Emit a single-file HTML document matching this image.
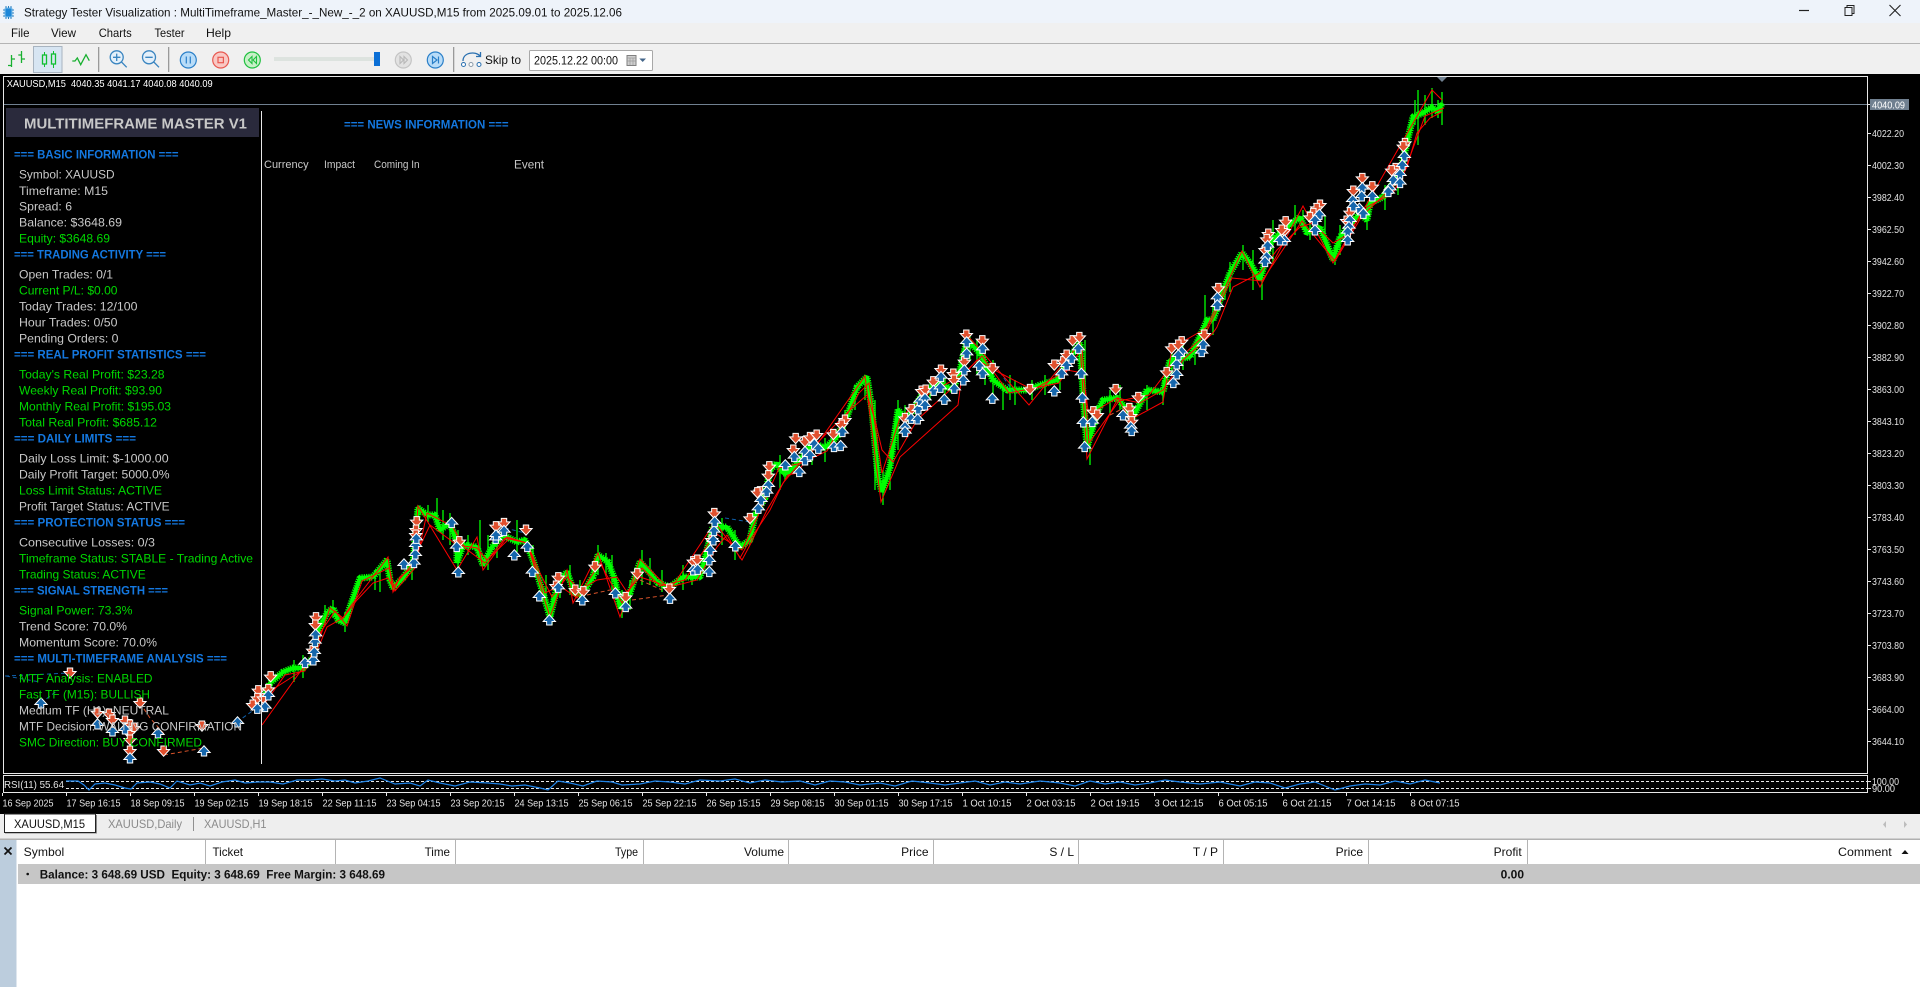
<!DOCTYPE html>
<html lang="en"><head><meta charset="utf-8"><title>Strategy Tester Visualization</title>
<style>
html,body{margin:0;padding:0;width:1920px;height:987px;overflow:hidden;background:#fff}
svg{display:block;font-family:"Liberation Sans",Arial,sans-serif}
.u{font-size:12px;fill:#111}
.w{font-size:12px;fill:#c8c8c8}
.g{font-size:12px;fill:#00d800}
.b{font-size:12px;font-weight:bold;fill:#1478e0}
.a{font-size:10.5px;fill:#e4e4e4}
.n{fill:none}
</style></head><body>
<svg width="1920" height="987" viewBox="0 0 1920 987" xmlns="http://www.w3.org/2000/svg">
<defs>
<polygon id="d1" points="-2.200,-4.500 2.200,-4.500 2.200,-1 5,-1 0,4.500 -5,-1 -2.200,-1" fill="#e0502e" stroke="#fff" stroke-width="2" paint-order="stroke"/>
<polygon id="u1" points="-2.200,4.500 2.200,4.500 2.200,1 5,1 0,-4.500 -5,1 -2.200,1" fill="#1566ac" stroke="#fff" stroke-width="2" paint-order="stroke"/>
<g id="d"><use href="#d1" transform="scale(3)"/></g>
<g id="u"><use href="#u1" transform="scale(3)"/></g>
<polyline id="pr" class="n" stroke-linejoin="bevel" points="263,700 270,683 283,672 293,668 303,668 313,658 318,630 327,613 333,608 338,620 345,623 350,607 360,578 373,577 387,560 390,580 393,588 403,578 413,563 418,508 427,515 435,515 440,530 450,523 457,543 457,563 463,545 477,547 483,565 492,547 503,535 517,542 525,540 533,560 543,593 550,617 558,583 567,572 575,595 583,593 593,577 598,555 608,562 615,580 620,608 630,593 640,562 650,573 658,583 670,587 683,577 700,577 713,527 727,527 740,547 750,540 755,515 765,498 770,470 777,463 783,473 788,473 800,460 813,443 825,448 837,437 847,417 857,387 867,377 872,410 878,477 882,492 890,467 898,410 907,420 923,393 940,383 953,390 960,370 967,340 980,353 993,380 1007,390 1027,390 1040,385 1057,380 1070,357 1080,343 1083,393 1087,447 1097,413 1103,400 1117,398 1133,417 1147,390 1163,392 1170,360 1190,357 1203,330 1207,320 1213,320 1220,300 1230,273 1242,253 1250,263 1260,280 1270,243 1283,230 1300,217 1307,233 1320,227 1333,260 1340,237 1360,213 1367,220 1370,203 1383,197 1400,173 1413,117 1423,113 1432,107 1438,112 1442,103"/>
</defs>

<!-- window chrome -->
<rect x="0" y="0" width="1920" height="23" fill="#eef3fa"/>
<rect x="0" y="23" width="1920" height="20" fill="#f0f0f0"/>
<rect x="0" y="43" width="1920" height="1" fill="#b4b4b4"/>
<rect x="0" y="44" width="1920" height="30" fill="#f0f0f0"/>
<!-- app icon -->
<rect x="5" y="8" width="7" height="9" rx="1" fill="#1c86d8" stroke="#7cc0ee"/>
<path d="M3 10h2M3 13h2M3 16h2M12 10h2M12 13h2M12 16h2M6 6v2M8.500 6v2M11 6v2M6 17v2M8.500 17v2M11 17v2" stroke="#2a7fc0" fill="none"/>
<text x="24" y="16.500" class="u" textLength="598" lengthAdjust="spacingAndGlyphs">Strategy Tester Visualization : MultiTimeframe_Master_-_New_-_2 on XAUUSD,M15 from 2025.09.01 to 2025.12.06</text>
<path d="M1799 10.500h10" stroke="#222" fill="none" stroke-width="1.200"/>
<path d="M1845 7.500h7v8h-7zM1847 7.500v-2h7v8h-2" stroke="#222" fill="none"/>
<path d="M1889.500 5l11 11M1900.500 5l-11 11" stroke="#222" fill="none" stroke-width="1.100"/>

<!-- menu -->
<text x="11" y="37" class="u" textLength="18.500" lengthAdjust="spacingAndGlyphs">File</text>
<text x="51" y="37" class="u" textLength="25" lengthAdjust="spacingAndGlyphs">View</text>
<text x="98.700" y="37" class="u" textLength="33" lengthAdjust="spacingAndGlyphs">Charts</text>
<text x="154.500" y="37" class="u" textLength="30" lengthAdjust="spacingAndGlyphs">Tester</text>
<text x="206" y="37" class="u" textLength="25" lengthAdjust="spacingAndGlyphs">Help</text>

<!-- toolbar -->
<path d="M11.500 55v12M8 65.500h3.500M11.500 59h3.500M21.500 51v12M18.300 55h3.200M21.500 59h3.500" stroke="#18b030" fill="none" stroke-width="1.300"/>
<rect x="33.500" y="46.500" width="28.500" height="26" fill="#d7e5f2" stroke="#a8b4c0"/>
<path d="M44.500 52v3M44.500 64v3M53.500 51v3M53.500 64v4" stroke="#0fbf2f" fill="none"/>
<rect x="42.500" y="55" width="4" height="9" fill="none" stroke="#0fbf2f" stroke-width="1.300"/>
<rect x="51.500" y="54" width="4" height="10" fill="none" stroke="#0fbf2f" stroke-width="1.300"/>
<polyline points="72.300,61 75,61 77.300,58 80.700,64.700 86,54.700 89.300,60.700" class="n" stroke="#18b030" stroke-width="1.300"/>
<rect x="98" y="47" width="1.300" height="25" fill="#9a9a9a"/>
<circle cx="116.700" cy="57.300" r="6.500" fill="#e4f0fa" stroke="#3a85c0" stroke-width="1.300"/>
<path d="M121.500 62l5.200 5.300M113 57.300h7.400M116.700 53.600v7.400" stroke="#3a85c0" fill="none" stroke-width="1.300"/>
<circle cx="149" cy="57.300" r="6.500" fill="#e4f0fa" stroke="#3a85c0" stroke-width="1.300"/>
<path d="M153.800 62l5.200 5.300M145.300 57.300h7.400" stroke="#3a85c0" fill="none" stroke-width="1.300"/>
<rect x="168" y="47" width="1.300" height="25" fill="#9a9a9a"/>
<circle cx="188.300" cy="60" r="8" fill="#b8dcf8" stroke="#2a7fc8" stroke-width="1.200"/>
<path d="M186.300 56.500v7M190.300 56.500v7" stroke="#2a7fc8" fill="none" stroke-width="1.200"/>
<circle cx="220.700" cy="60" r="8" fill="#f9c8c4" stroke="#e85850" stroke-width="1.200"/>
<rect x="218" y="57.300" width="5.400" height="5.400" fill="none" stroke="#e85850" stroke-width="1.200"/>
<circle cx="252.300" cy="60" r="8" fill="#c8f0c8" stroke="#20c040" stroke-width="1.200"/>
<path d="M252 56.500l-3.500 3.500 3.500 3.500zM256.500 56.500l-3.500 3.500 3.500 3.500z" fill="none" stroke="#20c040" stroke-width="1.100"/>
<rect x="274" y="57" width="101" height="4" fill="#dde3df"/>
<rect x="374" y="52" width="6" height="14" fill="#0b6fd6"/>
<circle cx="403.300" cy="60" r="8" fill="#e2e2e2" stroke="#c4c4c4" stroke-width="1.200"/>
<path d="M400 56.500l3.500 3.500-3.500 3.500zM404 56.500l3.500 3.500-3.500 3.500z" fill="none" stroke="#b8b8b8" stroke-width="1.100"/>
<circle cx="435.300" cy="60" r="8" fill="#b8dcf8" stroke="#2a7fc8" stroke-width="1.200"/>
<path d="M432.500 56.500l4.500 3.500-4.500 3.500zM438.500 56.500v7" fill="none" stroke="#2a7fc8" stroke-width="1.200"/>
<rect x="453" y="47" width="1.300" height="25" fill="#9a9a9a"/>
<path d="M463 61c0-9 13-10 17-5M480.500 52v4.500h-4.500" fill="none" stroke="#2a70b0" stroke-width="1.300"/>
<circle cx="463.500" cy="64.500" r="2" fill="#fff" stroke="#2a70b0"/>
<circle cx="471" cy="64.500" r="2" fill="#fff" stroke="#8a9aa8"/>
<circle cx="479" cy="64.500" r="2" fill="#fff" stroke="#2a70b0"/>
<text x="485" y="64" class="u" textLength="36" lengthAdjust="spacingAndGlyphs">Skip to</text>
<rect x="529.500" y="50.500" width="123" height="20" rx="1" fill="#fff" stroke="#a8a8a8"/>
<text x="534" y="64.500" class="u" textLength="84" lengthAdjust="spacingAndGlyphs">2025.12.22 00:00</text>
<rect x="627" y="55.500" width="9" height="10" fill="#cfcfcf" stroke="#808080"/>
<path d="M627 58h9M630 58v7M633 58v7M627 61h9" stroke="#9a9a9a" fill="none" stroke-width=".7"/>
<polygon points="639.300,58.500 646,58.500 642.700,62" fill="#44668a"/>

<!-- chart area -->
<rect x="0" y="74" width="1920" height="740" fill="#000"/>
<rect x="3.500" y="76.500" width="1864" height="697" fill="none" stroke="#e8e8e8"/>
<rect x="3.500" y="775.500" width="1864" height="17" fill="none" stroke="#e8e8e8"/>
<rect x="4" y="104" width="1863" height="1" fill="#708090"/>
<polygon points="1437,77 1447,77 1442,82" fill="#708090"/>

<text x="6.700" y="87" class="a" style="fill:#fff" textLength="206" lengthAdjust="spacingAndGlyphs">XAUUSD,M15&#160; 4040.35 4041.17 4040.08 4040.09</text>

<!-- green price bars -->
<use href="#pr" stroke="#00ff00" stroke-width="4"/>
<use href="#pr" stroke="#00ff00" stroke-width="7" stroke-dasharray="1.300 1"/>
<path class="n" stroke="#00ff00" stroke-width="1.300" d="M294 660V682M303 655V678M325 605V625M333 600V618M345 612V632M375 570V590M380 570V592M412 555V580M418 505V520M428 505V522M437 498V525M443 510V540M450 513V545M458 530V575M468 535V555M480 520V560M488 535V570M497 530V558M517 520V552M533 545V575M546 575V610M552 595V625M560 575V598M570 565V595M580 580V605M598 545V575M606 553V575M612 555V590M622 590V618M630 580V610M642 550V585M650 558V585M662 570V592M683 565V590M692 565V585M712 520V540M722 518V545M735 530V560M770 465V490M780 455V490M785 460V480M812 435V465M825 438V462M845 410V430M855 385V410M865 375V400M875 400V490M883 470V505M890 450V490M898 400V450M905 405V435M930 380V400M945 378V395M970 335V360M977 340V375M985 345V385M993 360V395M1003 385V410M1010 375V400M1015 380V405M1032 380V400M1045 375V395M1060 370V390M1085 340V430M1090 425V465M1097 405V425M1110 390V415M1120 385V410M1133 405V430M1147 385V410M1163 380V405M1172 345V375M1183 345V370M1195 345V365M1205 295V350M1213 305V335M1225 285V300M1230 262V292M1243 245V270M1253 250V290M1262 270V300M1273 220V265M1295 205V235M1303 210V230M1310 210V240M1325 215V240M1335 245V265M1340 225V255M1367 205V230M1385 185V210M1398 170V195M1415 100V125M1418 90V145M1425 95V125M1432 88V118M1438 100V118M1442 92V125"/>
<!-- dashed series -->
<g class="n" stroke="#0f5ea8" stroke-dasharray="4 3">
<polyline points="5,676 70,673"/><polyline points="6,676 40,682"/><polyline points="41,703 58,690"/><polyline points="237,722 262,704"/>
<polyline points="505,528 525,533"/><polyline points="725,518 750,522"/><polyline points="1000,372 1015,395"/>
</g>
<g class="n" stroke="#d9532a" stroke-dasharray="4 3">
<polyline points="164,755 204,748"/><polyline points="140,703 150,718 165,735"/><polyline points="587,595 610,590"/><polyline points="632,600 668,595"/><polyline points="640,580 662,590"/><polyline points="1110,415 1130,405"/>
</g>
<!-- red lines -->
<polyline class="n" stroke="#f00" points="262,725 300,672 313,658 330,608 343,618 350,607 388,557 393,592 400,577 413,567 418,506 457,570 477,537 483,570 507,537 527,543 550,617 567,570 573,603 598,553 620,617 640,559 670,590 715,522 742,560 750,545 767,510 788,475 797,473 865,376 881,502 900,457 958,405 967,335 1029,405 1080,343 1087,459 1118,398 1130,420 1163,402 1172,348 1203,330 1207,327 1242,251 1260,287 1303,206 1333,263 1373,193 1432,90 1442,100"/>
<polyline class="n" stroke="#f00" points="267,693 300,672 313,660 327,627 343,618 357,600 373,583 388,578 393,587 410,567 430,525 457,545 477,548 487,560 510,538 527,543 540,573 552,597 567,577 580,590 597,580 617,577 627,592 640,577 670,587 697,580 717,547 727,535 740,558 750,540 770,510 783,483 817,443 850,410 867,395 875,420 882,450 893,462 917,420 950,390 977,360 1000,373 1033,390 1067,370 1083,373 1088,410 1097,410 1117,398 1140,403 1163,390 1183,360 1213,333 1217,327 1233,287 1260,273 1277,250 1300,227 1313,223 1333,243 1347,235 1367,207 1393,193 1407,167 1417,133 1430,118 1442,112"/>
<polyline class="n" stroke="#f00" transform="translate(2,3)" points="263,700 283,672 303,668 318,630 333,608 345,623 360,578 387,565 393,588 413,565 425,510 450,523 463,545 483,560 503,535 525,540 543,590 558,583 575,595 598,560 620,600 640,565 658,583 683,577 713,530 740,547 755,515 777,465 800,460 825,448 857,390 867,380 880,470 898,415 923,393 960,372 980,353 1007,390 1057,380 1080,345 1087,440 1117,398 1147,392 1170,362 1203,332 1230,275 1260,278 1300,218 1333,258 1360,213 1400,175 1423,113 1442,105"/>

<!-- arrows -->
<g>
<use href="#u1" x="41" y="703"/><use href="#d1" x="70" y="673"/><use href="#d1" x="97.500" y="713"/><use href="#d1" x="109" y="714"/><use href="#d1" x="112.500" y="720"/><use href="#d1" x="125" y="721"/><use href="#d1" x="130" y="725"/><use href="#d1" x="134" y="728"/><use href="#d1" x="129" y="733"/><use href="#d1" x="130" y="740"/><use href="#d1" x="130" y="751"/><use href="#d1" x="140" y="703"/><use href="#d1" x="163.600" y="751"/><use href="#d1" x="202" y="726"/>
<use href="#u1" x="97.500" y="724"/><use href="#u1" x="112.500" y="731"/><use href="#u1" x="125" y="729"/><use href="#u1" x="130" y="758"/><use href="#u1" x="158" y="733"/><use href="#u1" x="204" y="751"/><use href="#u1" x="237.500" y="722"/>
</g>
<g transform="translate(250,480) scale(.33333)">
<use href="#d" x="62" y="590"/><use href="#d" x="25" y="632"/><use href="#d" x="22" y="655"/><use href="#d" x="55" y="628"/><use href="#d" x="40" y="655"/><use href="#d" x="8" y="675"/><use href="#d" x="198" y="413"/><use href="#d" x="196" y="435"/><use href="#d" x="188" y="512"/><use href="#d" x="500" y="125"/><use href="#d" x="498" y="150"/><use href="#d" x="497" y="165"/><use href="#d" x="628" y="185"/><use href="#d" x="738" y="140"/><use href="#d" x="762" y="130"/><use href="#d" x="828" y="150"/><use href="#d" x="925" y="293"/><use href="#d" x="918" y="318"/><use href="#d" x="976" y="330"/><use href="#d" x="1000" y="335"/><use href="#d" x="1035" y="260"/><use href="#d" x="1127" y="352"/><use href="#d" x="1162" y="281"/><use href="#d" x="1258" y="327"/><use href="#d" x="1330" y="245"/><use href="#d" x="1342" y="240"/><use href="#d" x="1393" y="100"/><use href="#d" x="1385" y="180"/><use href="#d" x="1500" y="115"/>
<use href="#u" x="45" y="680"/><use href="#u" x="22" y="685"/><use href="#u" x="55" y="645"/><use href="#u" x="165" y="548"/><use href="#u" x="190" y="540"/><use href="#u" x="193" y="516"/><use href="#u" x="195" y="485"/><use href="#u" x="197" y="463"/><use href="#u" x="462" y="252"/><use href="#u" x="492" y="248"/><use href="#u" x="496" y="222"/><use href="#u" x="497" y="195"/><use href="#u" x="499" y="175"/><use href="#u" x="605" y="128"/><use href="#u" x="620" y="200"/><use href="#u" x="625" y="276"/><use href="#u" x="737" y="175"/><use href="#u" x="738" y="165"/><use href="#u" x="762" y="152"/><use href="#u" x="793" y="225"/><use href="#u" x="832" y="200"/><use href="#u" x="847" y="275"/><use href="#u" x="868" y="348"/><use href="#u" x="898" y="420"/><use href="#u" x="925" y="322"/><use href="#u" x="997" y="360"/><use href="#u" x="1096" y="339"/><use href="#u" x="1127" y="380"/><use href="#u" x="1260" y="355"/><use href="#u" x="1330" y="270"/><use href="#u" x="1343" y="268"/><use href="#u" x="1378" y="275"/><use href="#u" x="1378" y="240"/><use href="#u" x="1381" y="210"/><use href="#u" x="1390" y="180"/><use href="#u" x="1392" y="152"/><use href="#u" x="1394" y="125"/><use href="#u" x="1456" y="198"/>
</g>
<g transform="translate(750,310) scale(.33333)">
<use href="#d" x="58" y="470"/><use href="#d" x="55" y="497"/><use href="#d" x="30" y="545"/><use href="#d" x="22" y="548"/><use href="#d" x="137" y="385"/><use href="#d" x="165" y="395"/><use href="#d" x="180" y="382"/><use href="#d" x="200" y="375"/><use href="#d" x="130" y="420"/><use href="#d" x="250" y="373"/><use href="#d" x="285" y="330"/><use href="#d" x="275" y="345"/><use href="#d" x="465" y="325"/><use href="#d" x="485" y="298"/><use href="#d" x="515" y="243"/><use href="#d" x="527" y="240"/><use href="#d" x="550" y="215"/><use href="#d" x="573" y="180"/><use href="#d" x="610" y="192"/><use href="#d" x="612" y="210"/><use href="#d" x="643" y="155"/><use href="#d" x="649" y="75"/><use href="#d" x="697" y="92"/><use href="#d" x="728" y="175"/><use href="#d" x="840" y="238"/><use href="#d" x="913" y="165"/><use href="#d" x="940" y="155"/><use href="#d" x="950" y="135"/><use href="#d" x="968" y="92"/><use href="#d" x="988" y="82"/><use href="#d" x="1030" y="305"/><use href="#d" x="1042" y="315"/><use href="#d" x="1097" y="238"/><use href="#d" x="1138" y="295"/><use href="#d" x="1142" y="318"/><use href="#d" x="1145" y="335"/><use href="#d" x="1165" y="262"/><use href="#d" x="1250" y="187"/><use href="#d" x="1265" y="115"/><use href="#d" x="1295" y="95"/><use href="#d" x="1285" y="105"/>
<use href="#u" x="33" y="570"/><use href="#u" x="25" y="595"/><use href="#u" x="55" y="525"/><use href="#u" x="50" y="545"/><use href="#u" x="106" y="465"/><use href="#u" x="148" y="485"/><use href="#u" x="133" y="440"/><use href="#u" x="165" y="425"/><use href="#u" x="165" y="450"/><use href="#u" x="180" y="435"/><use href="#u" x="193" y="402"/><use href="#u" x="205" y="415"/><use href="#u" x="252" y="410"/><use href="#u" x="272" y="407"/><use href="#u" x="277" y="365"/><use href="#u" x="465" y="350"/><use href="#u" x="465" y="365"/><use href="#u" x="483" y="325"/><use href="#u" x="503" y="327"/><use href="#u" x="505" y="297"/><use href="#u" x="510" y="272"/><use href="#u" x="525" y="265"/><use href="#u" x="525" y="285"/><use href="#u" x="551" y="241"/><use href="#u" x="571" y="232"/><use href="#u" x="583" y="268"/><use href="#u" x="573" y="200"/><use href="#u" x="613" y="235"/><use href="#u" x="640" y="210"/><use href="#u" x="643" y="180"/><use href="#u" x="650" y="130"/><use href="#u" x="650" y="96"/><use href="#u" x="698" y="115"/><use href="#u" x="688" y="167"/><use href="#u" x="698" y="190"/><use href="#u" x="727" y="265"/><use href="#u" x="913" y="243"/><use href="#u" x="935" y="190"/><use href="#u" x="950" y="165"/><use href="#u" x="965" y="145"/><use href="#u" x="985" y="115"/><use href="#u" x="994" y="190"/><use href="#u" x="997" y="263"/><use href="#u" x="1000" y="336"/><use href="#u" x="1027" y="335"/><use href="#u" x="1004" y="410"/><use href="#u" x="1119" y="315"/><use href="#u" x="1142" y="350"/><use href="#u" x="1145" y="362"/><use href="#u" x="1270" y="218"/><use href="#u" x="1280" y="192"/><use href="#u" x="1280" y="162"/><use href="#u" x="1295" y="125"/><use href="#u" x="1285" y="135"/><use href="#u" x="1355" y="125"/><use href="#u" x="1360" y="103"/>
</g>
<g transform="translate(1200,80) scale(.33333)">
<use href="#d" x="13" y="765"/><use href="#d" x="55" y="625"/><use href="#d" x="205" y="462"/><use href="#d" x="200" y="478"/><use href="#d" x="195" y="510"/><use href="#d" x="257" y="425"/><use href="#d" x="253" y="453"/><use href="#d" x="245" y="450"/><use href="#d" x="360" y="375"/><use href="#d" x="350" y="385"/><use href="#d" x="340" y="400"/><use href="#d" x="330" y="412"/><use href="#d" x="487" y="295"/><use href="#d" x="460" y="333"/><use href="#d" x="517" y="320"/><use href="#d" x="450" y="398"/><use href="#d" x="440" y="423"/><use href="#d" x="615" y="190"/><use href="#d" x="610" y="200"/><use href="#d" x="587" y="265"/><use href="#d" x="575" y="272"/>
<use href="#u" x="52" y="652"/><use href="#u" x="52" y="675"/><use href="#u" x="203" y="497"/><use href="#u" x="200" y="530"/><use href="#u" x="195" y="545"/><use href="#u" x="253" y="480"/><use href="#u" x="240" y="480"/><use href="#u" x="358" y="403"/><use href="#u" x="345" y="420"/><use href="#u" x="345" y="450"/><use href="#u" x="487" y="323"/><use href="#u" x="485" y="348"/><use href="#u" x="458" y="360"/><use href="#u" x="478" y="385"/><use href="#u" x="490" y="400"/><use href="#u" x="460" y="378"/><use href="#u" x="450" y="420"/><use href="#u" x="447" y="440"/><use href="#u" x="443" y="455"/><use href="#u" x="443" y="480"/><use href="#u" x="517" y="348"/><use href="#u" x="613" y="228"/><use href="#u" x="607" y="255"/><use href="#u" x="600" y="282"/><use href="#u" x="580" y="300"/><use href="#u" x="570" y="325"/><use href="#u" x="600" y="308"/><use href="#u" x="565" y="335"/>
</g>

<!-- panel -->
<rect x="261" y="111" width="1" height="653" fill="#e8e8e8"/>
<rect x="6" y="108" width="253" height="29" fill="#2a2a3c"/>
<text x="24" y="128.500" font-size="15" font-weight="bold" fill="#c8c8c8" textLength="223" lengthAdjust="spacingAndGlyphs">MULTITIMEFRAME MASTER V1</text>
<text x="14" y="158.500" class="b" textLength="164.600" lengthAdjust="spacingAndGlyphs">=== BASIC INFORMATION ===</text>
<text x="19" y="178.700" class="w" textLength="95.600" lengthAdjust="spacingAndGlyphs">Symbol: XAUUSD</text>
<text x="19" y="195" class="w" textLength="89" lengthAdjust="spacingAndGlyphs">Timeframe: M15</text>
<text x="19" y="210.700" class="w" textLength="53" lengthAdjust="spacingAndGlyphs">Spread: 6</text>
<text x="19" y="226.700" class="w" textLength="103" lengthAdjust="spacingAndGlyphs">Balance: $3648.69</text>
<text x="19" y="242.700" class="g" textLength="91" lengthAdjust="spacingAndGlyphs">Equity: $3648.69</text>
<text x="14" y="258.700" class="b" textLength="152" lengthAdjust="spacingAndGlyphs">=== TRADING ACTIVITY ===</text>
<text x="19" y="278.700" class="w" textLength="94" lengthAdjust="spacingAndGlyphs">Open Trades: 0/1</text>
<text x="19" y="294.700" class="g" textLength="98.500" lengthAdjust="spacingAndGlyphs">Current P/L: $0.00</text>
<text x="19" y="310.700" class="w" textLength="118.500" lengthAdjust="spacingAndGlyphs">Today Trades: 12/100</text>
<text x="19" y="326.700" class="w" textLength="98.500" lengthAdjust="spacingAndGlyphs">Hour Trades: 0/50</text>
<text x="19" y="342.700" class="w" textLength="99.500" lengthAdjust="spacingAndGlyphs">Pending Orders: 0</text>
<text x="14" y="358.700" class="b" textLength="192" lengthAdjust="spacingAndGlyphs">=== REAL PROFIT STATISTICS ===</text>
<text x="19" y="378.700" class="g" textLength="145.600" lengthAdjust="spacingAndGlyphs">Today's Real Profit: $23.28</text>
<text x="19" y="394.700" class="g" textLength="143" lengthAdjust="spacingAndGlyphs">Weekly Real Profit: $93.90</text>
<text x="19" y="410.700" class="g" textLength="152" lengthAdjust="spacingAndGlyphs">Monthly Real Profit: $195.03</text>
<text x="19" y="426.700" class="g" textLength="138" lengthAdjust="spacingAndGlyphs">Total Real Profit: $685.12</text>
<text x="14" y="442.700" class="b" textLength="122" lengthAdjust="spacingAndGlyphs">=== DAILY LIMITS ===</text>
<text x="19" y="462.700" class="w" textLength="149.600" lengthAdjust="spacingAndGlyphs">Daily Loss Limit: $-1000.00</text>
<text x="19" y="478.700" class="w" textLength="150.600" lengthAdjust="spacingAndGlyphs">Daily Profit Target: 5000.0%</text>
<text x="19" y="494.700" class="g" textLength="143" lengthAdjust="spacingAndGlyphs">Loss Limit Status: ACTIVE</text>
<text x="19" y="510.700" class="w" textLength="150.600" lengthAdjust="spacingAndGlyphs">Profit Target Status: ACTIVE</text>
<text x="14" y="526.700" class="b" textLength="171" lengthAdjust="spacingAndGlyphs">=== PROTECTION STATUS ===</text>
<text x="19" y="546.700" class="w" textLength="136" lengthAdjust="spacingAndGlyphs">Consecutive Losses: 0/3</text>
<text x="19" y="562.700" class="g" textLength="234" lengthAdjust="spacingAndGlyphs">Timeframe Status: STABLE - Trading Active</text>
<text x="19" y="578.700" class="g" textLength="126.700" lengthAdjust="spacingAndGlyphs">Trading Status: ACTIVE</text>
<text x="14" y="594.700" class="b" textLength="154" lengthAdjust="spacingAndGlyphs">=== SIGNAL STRENGTH ===</text>
<text x="19" y="614.700" class="g" textLength="113.500" lengthAdjust="spacingAndGlyphs">Signal Power: 73.3%</text>
<text x="19" y="630.700" class="w" textLength="108" lengthAdjust="spacingAndGlyphs">Trend Score: 70.0%</text>
<text x="19" y="646.700" class="w" textLength="138" lengthAdjust="spacingAndGlyphs">Momentum Score: 70.0%</text>
<text x="14" y="662.700" class="b" textLength="213" lengthAdjust="spacingAndGlyphs">=== MULTI-TIMEFRAME ANALYSIS ===</text>
<text x="19" y="682.700" class="g" textLength="133.500" lengthAdjust="spacingAndGlyphs">MTF Analysis: ENABLED</text>
<text x="19" y="698.700" class="g" textLength="131" lengthAdjust="spacingAndGlyphs">Fast TF (M15): BULLISH</text>
<text x="19" y="714.700" class="w" textLength="150" lengthAdjust="spacingAndGlyphs">Medium TF (H1): NEUTRAL</text>
<text x="19" y="730.700" class="w" textLength="223" lengthAdjust="spacingAndGlyphs">MTF Decision: WAITING CONFIRMATION</text>
<text x="19" y="746.700" class="g" textLength="183" lengthAdjust="spacingAndGlyphs">SMC Direction: BUY CONFIRMED</text>

<text x="344" y="128.700" class="b" textLength="164.600" lengthAdjust="spacingAndGlyphs">=== NEWS INFORMATION ===</text>
<text x="264" y="168" class="w" style="font-size:11px" textLength="44.600" lengthAdjust="spacingAndGlyphs">Currency</text>
<text x="324" y="168" class="w" style="font-size:11px" textLength="31" lengthAdjust="spacingAndGlyphs">Impact</text>
<text x="374" y="168" class="w" style="font-size:11px" textLength="45.600" lengthAdjust="spacingAndGlyphs">Coming In</text>
<text x="514" y="168.500" class="w" textLength="30" lengthAdjust="spacingAndGlyphs">Event</text>

<!-- price axis -->
<path d="M1867 133.500h4M1867 165.500h4M1867 197.500h4M1867 229.500h4M1867 261.500h4M1867 293.500h4M1867 325.500h4M1867 357.500h4M1867 389.500h4M1867 421.500h4M1867 453.500h4M1867 485.500h4M1867 517.500h4M1867 549.500h4M1867 581.500h4M1867 613.500h4M1867 645.500h4M1867 677.500h4M1867 709.500h4M1867 741.500h4M1867 781.500h4M1867 788.500h4M1867 104.500h3" stroke="#e8e8e8"/>
<text x="1872" y="137" class="a" textLength="32" lengthAdjust="spacingAndGlyphs">4022.20</text>
<text x="1872" y="169" class="a" textLength="32" lengthAdjust="spacingAndGlyphs">4002.30</text>
<text x="1872" y="201" class="a" textLength="32" lengthAdjust="spacingAndGlyphs">3982.40</text>
<text x="1872" y="233" class="a" textLength="32" lengthAdjust="spacingAndGlyphs">3962.50</text>
<text x="1872" y="265" class="a" textLength="32" lengthAdjust="spacingAndGlyphs">3942.60</text>
<text x="1872" y="297" class="a" textLength="32" lengthAdjust="spacingAndGlyphs">3922.70</text>
<text x="1872" y="329" class="a" textLength="32" lengthAdjust="spacingAndGlyphs">3902.80</text>
<text x="1872" y="361" class="a" textLength="32" lengthAdjust="spacingAndGlyphs">3882.90</text>
<text x="1872" y="393" class="a" textLength="32" lengthAdjust="spacingAndGlyphs">3863.00</text>
<text x="1872" y="425" class="a" textLength="32" lengthAdjust="spacingAndGlyphs">3843.10</text>
<text x="1872" y="457" class="a" textLength="32" lengthAdjust="spacingAndGlyphs">3823.20</text>
<text x="1872" y="489" class="a" textLength="32" lengthAdjust="spacingAndGlyphs">3803.30</text>
<text x="1872" y="521" class="a" textLength="32" lengthAdjust="spacingAndGlyphs">3783.40</text>
<text x="1872" y="553" class="a" textLength="32" lengthAdjust="spacingAndGlyphs">3763.50</text>
<text x="1872" y="585" class="a" textLength="32" lengthAdjust="spacingAndGlyphs">3743.60</text>
<text x="1872" y="617" class="a" textLength="32" lengthAdjust="spacingAndGlyphs">3723.70</text>
<text x="1872" y="649" class="a" textLength="32" lengthAdjust="spacingAndGlyphs">3703.80</text>
<text x="1872" y="681" class="a" textLength="32" lengthAdjust="spacingAndGlyphs">3683.90</text>
<text x="1872" y="713" class="a" textLength="32" lengthAdjust="spacingAndGlyphs">3664.00</text>
<text x="1872" y="745" class="a" textLength="32" lengthAdjust="spacingAndGlyphs">3644.10</text>
<text x="1872" y="785" class="a" textLength="27" lengthAdjust="spacingAndGlyphs">100.00</text>
<text x="1872" y="792" class="a" textLength="23" lengthAdjust="spacingAndGlyphs">90.00</text>
<rect x="1870" y="99" width="39" height="11" fill="#708090"/>
<text x="1872" y="108.500" class="a" style="fill:#fff" textLength="33" lengthAdjust="spacingAndGlyphs">4040.09</text>

<!-- RSI -->
<path d="M66 781.500H1867M66 788.500H1867" stroke="#e8e8e8" stroke-dasharray="3 2" fill="none"/>
<text x="4" y="788" class="a" textLength="60" lengthAdjust="spacingAndGlyphs">RSI(11) 55.64</text>
<polyline class="n" stroke="#1e82e6" stroke-width="1.200" points="66,781 78,781 84,785 89,790 95,784 105,783 115,785 125,788 131,789 137,783 150,782 160,784 170,788 177,781 190,785 200,783 210,786 222,782 235,780 245,783 258,782 270,782 283,784 297,780 310,780 322,779 335,781 345,780 355,783 368,781 380,778 395,784 410,783 420,786 428,780 440,783 455,786 470,782 488,783 500,784 512,786 525,785 540,788 548,790 558,781 570,783 583,786 597,781 612,782 622,785 640,784 655,781 670,782 685,784 700,780 720,781 735,779 750,783 765,780 782,782 800,781 815,785 830,781 845,782 860,785 880,783 895,786 912,781 930,783 945,785 960,783 975,781 990,785 1005,782 1020,784 1040,781 1060,783 1075,786 1090,781 1105,784 1120,782 1135,785 1150,783 1165,780 1180,782 1200,784 1220,782 1240,786 1255,782 1270,783 1285,788 1300,784 1315,782 1335,790 1350,786 1365,784 1380,785 1395,781 1410,784 1425,780 1435,782 1440,783"/>

<!-- time axis -->
<path d="M2.500 793v3M66.500 793v3M130.500 793v3M194.500 793v3M258.500 793v3M322.500 793v3M386.500 793v3M450.500 793v3M514.500 793v3M578.500 793v3M642.500 793v3M706.500 793v3M770.500 793v3M834.500 793v3M898.500 793v3M962.500 793v3M1026.500 793v3M1090.500 793v3M1154.500 793v3M1218.500 793v3M1282.500 793v3M1346.500 793v3M1410.500 793v3" stroke="#e8e8e8" fill="none"/>
<text x="2.500" y="806.500" class="a" textLength="51" lengthAdjust="spacingAndGlyphs">16 Sep 2025</text>
<text x="66.500" y="806.500" class="a" textLength="54" lengthAdjust="spacingAndGlyphs">17 Sep 16:15</text>
<text x="130.500" y="806.500" class="a" textLength="54" lengthAdjust="spacingAndGlyphs">18 Sep 09:15</text>
<text x="194.500" y="806.500" class="a" textLength="54" lengthAdjust="spacingAndGlyphs">19 Sep 02:15</text>
<text x="258.500" y="806.500" class="a" textLength="54" lengthAdjust="spacingAndGlyphs">19 Sep 18:15</text>
<text x="322.500" y="806.500" class="a" textLength="54" lengthAdjust="spacingAndGlyphs">22 Sep 11:15</text>
<text x="386.500" y="806.500" class="a" textLength="54" lengthAdjust="spacingAndGlyphs">23 Sep 04:15</text>
<text x="450.500" y="806.500" class="a" textLength="54" lengthAdjust="spacingAndGlyphs">23 Sep 20:15</text>
<text x="514.500" y="806.500" class="a" textLength="54" lengthAdjust="spacingAndGlyphs">24 Sep 13:15</text>
<text x="578.500" y="806.500" class="a" textLength="54" lengthAdjust="spacingAndGlyphs">25 Sep 06:15</text>
<text x="642.500" y="806.500" class="a" textLength="54" lengthAdjust="spacingAndGlyphs">25 Sep 22:15</text>
<text x="706.500" y="806.500" class="a" textLength="54" lengthAdjust="spacingAndGlyphs">26 Sep 15:15</text>
<text x="770.500" y="806.500" class="a" textLength="54" lengthAdjust="spacingAndGlyphs">29 Sep 08:15</text>
<text x="834.500" y="806.500" class="a" textLength="54" lengthAdjust="spacingAndGlyphs">30 Sep 01:15</text>
<text x="898.500" y="806.500" class="a" textLength="54" lengthAdjust="spacingAndGlyphs">30 Sep 17:15</text>
<text x="962.500" y="806.500" class="a" textLength="49" lengthAdjust="spacingAndGlyphs">1 Oct 10:15</text>
<text x="1026.500" y="806.500" class="a" textLength="49" lengthAdjust="spacingAndGlyphs">2 Oct 03:15</text>
<text x="1090.500" y="806.500" class="a" textLength="49" lengthAdjust="spacingAndGlyphs">2 Oct 19:15</text>
<text x="1154.500" y="806.500" class="a" textLength="49" lengthAdjust="spacingAndGlyphs">3 Oct 12:15</text>
<text x="1218.500" y="806.500" class="a" textLength="49" lengthAdjust="spacingAndGlyphs">6 Oct 05:15</text>
<text x="1282.500" y="806.500" class="a" textLength="49" lengthAdjust="spacingAndGlyphs">6 Oct 21:15</text>
<text x="1346.500" y="806.500" class="a" textLength="49" lengthAdjust="spacingAndGlyphs">7 Oct 14:15</text>
<text x="1410.500" y="806.500" class="a" textLength="49" lengthAdjust="spacingAndGlyphs">8 Oct 07:15</text>

<!-- tabs -->
<rect x="0" y="814" width="1920" height="25" fill="#eeeeee"/>
<rect x="5" y="815" width="92" height="18.500" fill="#8a8a8a"/>
<rect x="4.500" y="814" width="91" height="18.500" fill="#fff" stroke="#222"/>
<text x="14" y="828" class="u" textLength="71" lengthAdjust="spacingAndGlyphs">XAUUSD,M15</text>
<text x="108" y="828" class="u" style="fill:#8a8a8a" textLength="74" lengthAdjust="spacingAndGlyphs">XAUUSD,Daily</text>
<rect x="193" y="817" width="1" height="14" fill="#909090"/>
<text x="204" y="828" class="u" style="fill:#8a8a8a" textLength="62.500" lengthAdjust="spacingAndGlyphs">XAUUSD,H1</text>
<polygon points="1886,821 1886,828 1883,824.500" fill="#bdbdbd"/>
<polygon points="1904,821 1904,828 1907,824.500" fill="#bdbdbd"/>

<!-- terminal table -->
<rect x="0" y="838.500" width="1920" height="1.500" fill="#b0b0b0"/>
<rect x="0" y="840" width="16.500" height="147" fill="#bccddd"/>
<path d="M4.500 847.500l7 7M11.500 847.500l-7 7" stroke="#111" stroke-width="1.700" fill="none"/>
<path d="M205.500 840v24M335.500 840v24M455.500 840v24M643.500 840v24M788.500 840v24M933.500 840v24M1078.500 840v24M1223.500 840v24M1368.500 840v24M1527.500 840v24" stroke="#b4b4b4" fill="none"/>
<text x="23.700" y="856" class="u" textLength="40.500" lengthAdjust="spacingAndGlyphs">Symbol</text>
<text x="212.500" y="856" class="u" textLength="30.500" lengthAdjust="spacingAndGlyphs">Ticket</text>
<text x="424.600" y="856" class="u" textLength="25.400" lengthAdjust="spacingAndGlyphs">Time</text>
<text x="615" y="856" class="u" textLength="23" lengthAdjust="spacingAndGlyphs">Type</text>
<text x="784" y="856" class="u" text-anchor="end">Volume</text>
<text x="928.500" y="856" class="u" text-anchor="end">Price</text>
<text x="1074" y="856" class="u" text-anchor="end">S / L</text>
<text x="1218" y="856" class="u" text-anchor="end">T / P</text>
<text x="1363" y="856" class="u" text-anchor="end">Price</text>
<text x="1521.700" y="856" class="u" text-anchor="end">Profit</text>
<text x="1838" y="856" class="u" textLength="53.700" lengthAdjust="spacingAndGlyphs">Comment</text>
<polygon points="1901.500,854 1908.500,854 1905,850" fill="#111"/>
<rect x="18" y="864" width="1902" height="20" fill="#c6c6c6"/>
<circle cx="27.700" cy="874" r="1.300" fill="#111"/>
<text x="39.700" y="878.500" class="u" font-weight="bold" textLength="345.300" lengthAdjust="spacingAndGlyphs">Balance: 3 648.69 USD&#160; Equity: 3 648.69&#160; Free Margin: 3 648.69</text>
<text x="1524" y="878.500" class="u" font-weight="bold" text-anchor="end">0.00</text>
</svg>
</body></html>
